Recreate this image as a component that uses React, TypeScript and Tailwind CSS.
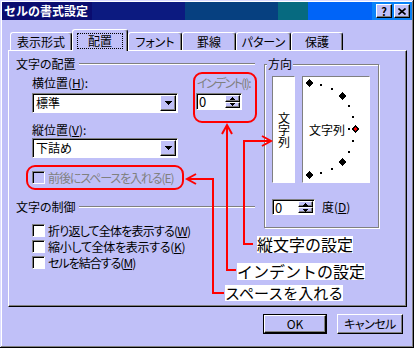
import React from "react";
import clsx from "clsx";

// raised / sunken bevels used all over the dialog
const raised =
  "border border-t-white border-l-white border-r-black border-b-black bg-[#c0c0f8] shadow-[inset_-1px_-1px_0_#808080]";
const sunken =
  "border border-t-[#808080] border-l-[#808080] border-r-white border-b-white shadow-[inset_1px_1px_0_#000]";

function Down({ w = 7, h = 4 }: { w?: number; h?: number }) {
  return (
    <svg width={w} height={h} viewBox={`0 0 ${w} ${h}`} shapeRendering="crispEdges">
      <polygon points={`0,0 ${w},0 ${w / 2},${h}`} fill="#000" />
    </svg>
  );
}

function Up({ w = 5, h = 3 }: { w?: number; h?: number }) {
  return (
    <svg width={w} height={h} viewBox={`0 0 ${w} ${h}`} shapeRendering="crispEdges">
      <polygon points={`0,${h} ${w},${h} ${w / 2},0`} fill="#000" />
    </svg>
  );
}

function Combo({ value, className }: { value: string; className?: string }) {
  return (
    <div className={clsx("flex h-[20px] w-[146px] items-center bg-white", sunken, className)}>
      <span className="flex-1 pl-[3px] leading-[14px]">{value}</span>
      <div className={clsx("mr-[1px] flex h-[16px] w-[16px] items-center justify-center", raised)}>
        <Down />
      </div>
    </div>
  );
}

function Spin({ className }: { className?: string }) {
  return (
    <div className={clsx("flex items-stretch bg-white", sunken, className)}>
      <span className="flex flex-1 items-center pl-[2px] text-[13px] leading-[13px]">0</span>
      <div className="my-[1px] mr-[1px] flex w-[15px] flex-col">
        <div className={clsx("flex flex-1 items-center justify-center", raised)}>
          <Up />
        </div>
        <div className={clsx("flex flex-1 items-center justify-center", raised)}>
          <Down w={5} h={3} />
        </div>
      </div>
    </div>
  );
}

function Check({
  children,
  disabled,
  className,
  textClass,
}: {
  children: React.ReactNode;
  disabled?: boolean;
  className?: string;
  textClass?: string;
}) {
  return (
    <div className={clsx("ml-[16px] flex h-[13px] items-center gap-[3px]", className)}>
      <div className={clsx("h-[13px] w-[13px] shrink-0", sunken, disabled ? "bg-[#c0c0f8]" : "bg-white")} />
      <span className={clsx("whitespace-nowrap leading-[13px]", disabled && "text-[#808080]", textClass)}>{children}</span>
    </div>
  );
}

function GroupLine({ label, className }: { label: string; className?: string }) {
  return (
    <div className={clsx("flex h-[12px] items-center", className)}>
      <span className="leading-[12px]">{label}</span>
      <div className="ml-[3px] h-[2px] flex-1 border-t border-b border-t-[#808080] border-b-white" />
    </div>
  );
}

const tabs = [
  { label: "表示形式", w: "w-[62px]" },
  { label: "配置", w: "w-[56px]", active: true },
  { label: "フォント", w: "w-[54px]" },
  { label: "罫線", w: "w-[54px]" },
  { label: "パターン", w: "w-[55px]" },
  { label: "保護", w: "w-[52px]" },
];

function Dial() {
  // points on the half circle, every 15 degrees
  const marks = [];
  for (let a = 90; a >= -90; a -= 15) {
    const r = (a * Math.PI) / 180;
    const x = 6 + 46 * Math.cos(r);
    const y = 52 - 46 * Math.sin(r);
    marks.push({ a, x: Math.round(x), y: Math.round(y) });
  }
  return (
    <svg className="pointer-events-none absolute left-0 top-0" width={66} height={105} shapeRendering="crispEdges">
      {marks.map((m) =>
        m.a === 0 ? (
          <g key={m.a}>
            <polygon points={`${m.x - 4},${m.y} ${m.x},${m.y - 4} ${m.x + 4},${m.y} ${m.x},${m.y + 4}`} fill="#000" />
            <polygon points={`${m.x - 2},${m.y} ${m.x},${m.y - 2} ${m.x + 2},${m.y} ${m.x},${m.y + 2}`} fill="#ff0000" />
          </g>
        ) : m.a % 45 === 0 ? (
          <polygon
            key={m.a}
            points={`${m.x - 4},${m.y} ${m.x},${m.y - 4} ${m.x + 4},${m.y} ${m.x},${m.y + 4}`}
            fill="#000"
          />
        ) : (
          <rect key={m.a} x={m.x - 1} y={m.y - 1} width={2} height={2} fill="#000" />
        )
      )}
      <rect x={45} y={51} width={2} height={2} fill="#000" />
    </svg>
  );
}

export default function App() {
  return (
    <div className="relative h-[348px] w-[414px] overflow-hidden bg-[#c0c0f8] font-['Noto_Sans_CJK_JP',sans-serif] text-[12px] leading-[12px] text-black [font-feature-settings:'palt'] shadow-[inset_-1px_-1px_0_#000,inset_1px_1px_0_#dcdcff,inset_-2px_-2px_0_#808080,inset_2px_2px_0_#fff]">
      {/* title bar */}
      <div className="mx-[2px] mt-[2px] flex h-[18px] items-center justify-between bg-[linear-gradient(to_right,#0a0c70_0px,#0a0c70_90px,#0c1a80_90px,#0c1a80_183px,#064080_183px,#064080_276px,#066a80_276px,#066a80_306px,#0064f8_306px,#0064f8_370px,#0a82f8_370px)]">
        <span className="pl-[2px] text-[12px] font-bold leading-[14px] text-white [font-feature-settings:normal]">セルの書式設定</span>
        <div className="mr-[2px] flex gap-[2px]">
          <div className={clsx("flex h-[14px] w-[16px] items-center justify-center text-[11px] font-bold leading-[11px]", raised)}>?</div>
          <div className={clsx("flex h-[14px] w-[16px] items-center justify-center", raised)}>
            <svg width="8" height="7" viewBox="0 0 8 7">
              <path d="M0.5 0.5L7.5 6.5M7.5 0.5L0.5 6.5" stroke="#000" strokeWidth="1.6" />
            </svg>
          </div>
        </div>
      </div>

      {/* tabs */}
      <div className="ml-[10px] mt-[9px] flex h-[22px] items-end">
        {tabs.map((t) =>
          t.active ? (
            <div
              key={t.label}
              className={clsx(
                "relative z-10 flex h-[22px] justify-center rounded-t-[3px] border-t border-l border-r border-t-white border-l-white border-r-black bg-[#c0c0f8] pt-[3px] shadow-[inset_-1px_0_0_#808080]",
                t.w
              )}
            >
              <span className="flex h-[16px] items-center border border-dotted border-black px-[10px] leading-[14px]">{t.label}</span>
            </div>
          ) : (
            <div
              key={t.label}
              className={clsx(
                "mb-[1px] flex h-[18px] items-center justify-center rounded-t-[3px] border-t border-l border-r border-t-white border-l-white border-r-black shadow-[inset_-1px_0_0_#808080]",
                t.w
              )}
            >
              {t.label}
            </div>
          )
        )}
      </div>

      {/* panel */}
      <div className="-mt-[1px] ml-[8px] h-[257px] w-[399px] border border-t-white border-l-white border-r-black border-b-black shadow-[inset_-1px_-1px_0_#808080]">
        <div className="flex pl-[7px] pt-[7px]">
          {/* 文字の配置 / 文字の制御 */}
          <div className="flex w-[239px] flex-col">
            <GroupLine label="文字の配置" />
            <div className="ml-[16px] mt-[7px] flex">
              <div className="flex w-[146px] flex-col">
                <span className="leading-[12px]">
                  横位置(<span className="underline underline-offset-[1px]">H</span>):
                </span>
                <Combo value="標準" className="mt-[4px]" />
                <span className="mt-[11px] leading-[12px]">
                  縦位置(<span className="underline underline-offset-[1px]">V</span>):
                </span>
                <Combo value="下詰め" className="mt-[2px]" />
              </div>
              <div className="ml-[18px] flex flex-col">
                <span className="ml-[1px] whitespace-nowrap leading-[12px] tracking-[-1.6px] text-[#808080]">インデント(I):</span>
                <Spin className="mt-[4px] h-[17px] w-[46px]" />
              </div>
            </div>
            <Check disabled className="mt-[13px]" textClass="tracking-[-1.1px]">
              前後にスペースを入れる(E)
            </Check>
            <GroupLine label="文字の制御" className="mt-[17px]" />
            <Check className="mt-[11px]" textClass="tracking-[-0.8px]">
              折り返して全体を表示する(<span className="underline underline-offset-[1px]">W</span>)
            </Check>
            <Check className="mt-[3px]" textClass="tracking-[-0.3px]">
              縮小して全体を表示する(<span className="underline underline-offset-[1px]">K</span>)
            </Check>
            <Check className="mt-[3px]" textClass="tracking-[-1px]">
              セルを結合する(<span className="underline underline-offset-[1px]">M</span>)
            </Check>
          </div>

          {/* 方向 */}
          <div className="ml-[9px] mt-[6px] flex h-[164px] w-[115px] flex-col border border-[#808080] shadow-[inset_1px_1px_0_#fff,1px_1px_0_#fff]">
            <span className="-mt-[7px] ml-[2px] w-fit bg-[#c0c0f8] px-[1px] leading-[12px]">方向</span>
            <div className="ml-[7px] mt-[6px] flex gap-[7px]">
              <div className="flex h-[107px] w-[23px] items-center justify-center border border-t-[#808080] border-l-[#808080] border-r-white border-b-white bg-white">
                <span className="leading-[12px] [writing-mode:vertical-rl] [font-feature-settings:normal]">文字列</span>
              </div>
              <div className="relative flex h-[107px] w-[68px] items-center border border-t-[#808080] border-l-[#808080] border-r-white border-b-white bg-white">
                <Dial />
                <span className="relative pl-[6px] leading-[12px]">文字列</span>
              </div>
            </div>
            <div className="ml-[7px] mt-[16px] flex items-center gap-[7px]">
              <Spin className="h-[16px] w-[43px]" />
              <span className="leading-[12px]">
                度(<span className="underline underline-offset-[1px]">D</span>)
              </span>
            </div>
          </div>
        </div>
      </div>

      {/* dialog buttons */}
      <div className="mt-[7px] flex justify-end gap-[10px] pr-[11px]">
        <div className="h-[20px] w-[64px] border border-black">
          <div className={clsx("flex h-full w-full items-center justify-center leading-[12px]", raised)}>OK</div>
        </div>
        <div className={clsx("flex h-[20px] w-[66px] items-center justify-center leading-[12px] tracking-[-0.5px]", raised)}>キャンセル</div>
      </div>

      {/* red annotations */}
      <svg className="pointer-events-none absolute left-0 top-0" width={414} height={348}>
        <g fill="none" stroke="#ff0000" strokeWidth={2}>
          <rect x={194} y={73} width={62} height={49} rx={8} />
          <rect x={27} y={166} width={156} height={23} rx={8} />
          <polyline points="224,293 213,293 213,179 187,179" />
          <polyline points="196,174 187,179 196,184" />
          <polyline points="236,270 227,270 227,125" />
          <polyline points="222,134 227,125 232,134" />
          <polyline points="253,244 244,244 244,141 271,141" />
          <polyline points="262,136 271,141 262,146" />
        </g>
      </svg>
      <div className="absolute left-[257px] top-[236px] bg-white text-[16px] leading-[17px] [font-feature-settings:normal]">縦文字の設定</div>
      <div className="absolute left-[237px] top-[263px] bg-white text-[16px] leading-[17px] [font-feature-settings:normal]">インデントの設定</div>
      <div className="absolute left-[225px] top-[285px] bg-white text-[15px] leading-[16px] [font-feature-settings:normal]">スペースを入れる</div>
    </div>
  );
}
